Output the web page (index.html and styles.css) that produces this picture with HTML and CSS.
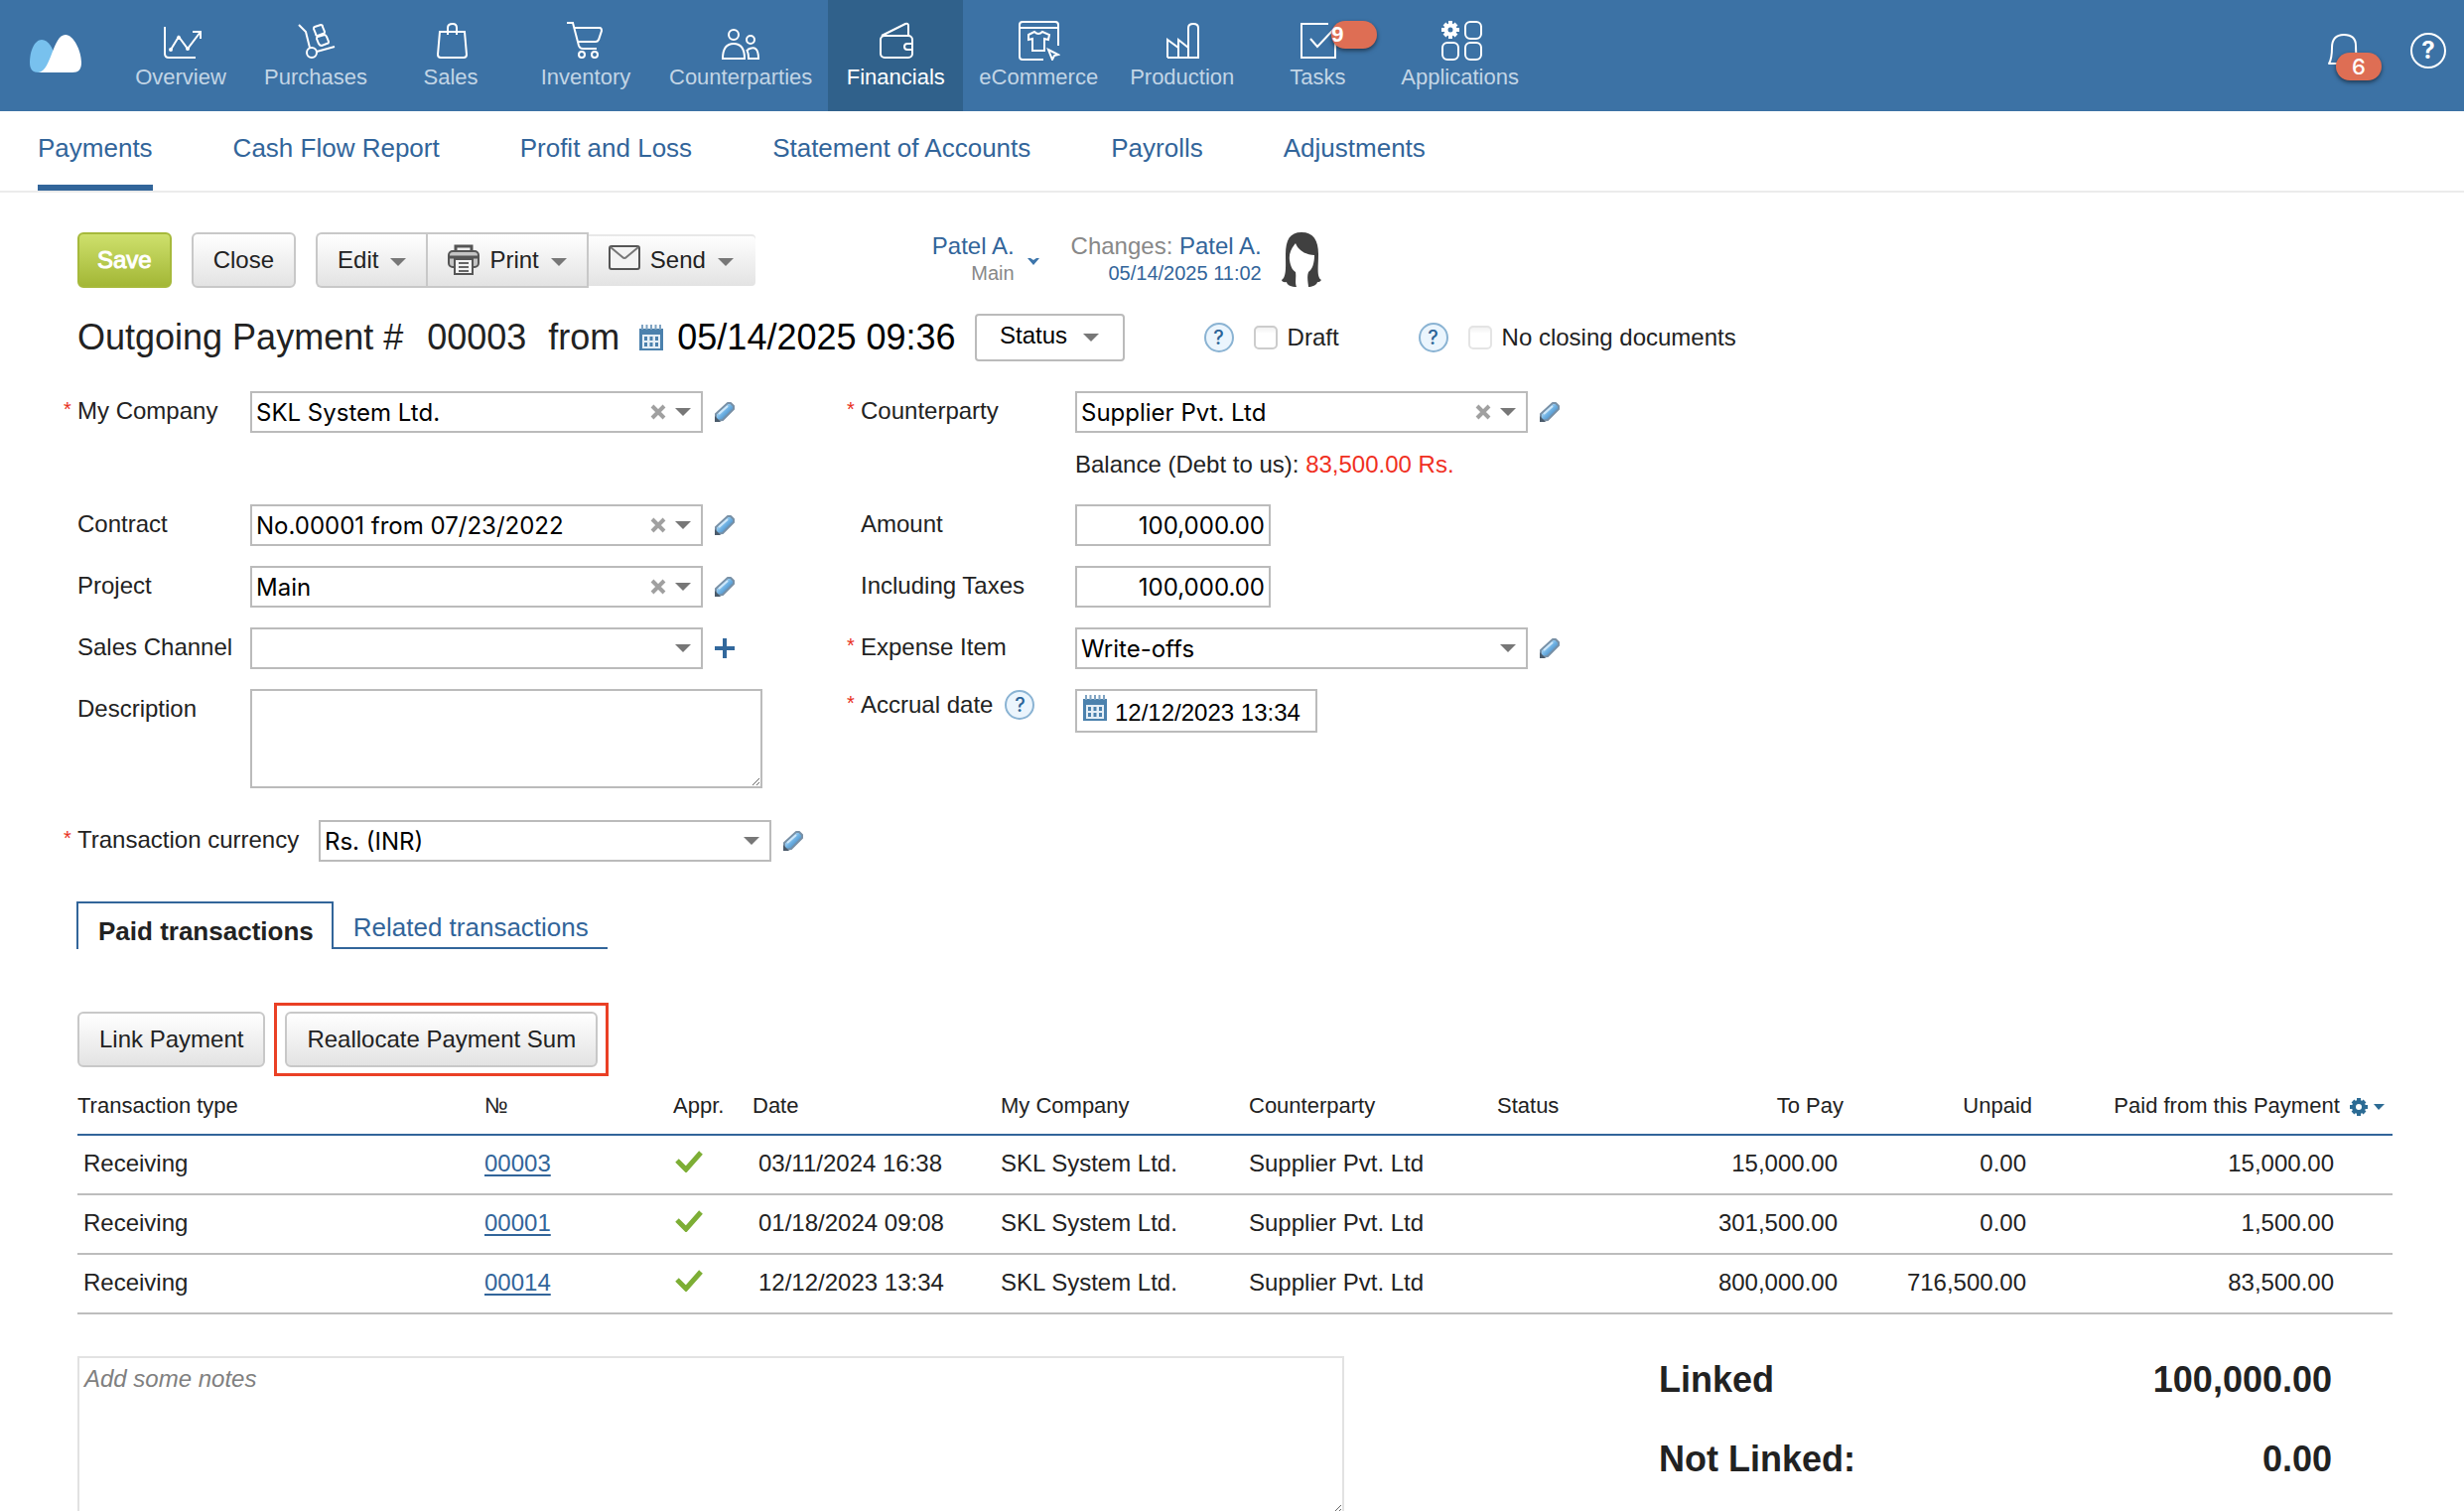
FILE: index.html
```html
<!DOCTYPE html>
<html lang="en">

<head>
    <meta charset="UTF-8">
    <meta name="viewport" content="width=device-width, initial-scale=1.0">
    <title>Outgoing Payment</title>
    <link rel="stylesheet" href="styles.css">
</head>

<body>
    <!-- shared icons -->
    <svg class="sprite" width="0" height="0" aria-hidden="true">
        <defs>
            <linearGradient id="pencil-fill" x1="0" y1="0" x2="1" y2="1">
                <stop offset="0.3" stop-color="#b5dcf7" />
                <stop offset="0.5" stop-color="#6fb2e4" />
                <stop offset="0.75" stop-color="#4a88bd" />
            </linearGradient>
        </defs>
        <symbol id="caret" viewBox="0 0 16 8">
            <path d="M0 0H16L8 8Z" fill="#777" />
        </symbol>
        <symbol id="cross" viewBox="0 0 16 16">
            <path d="M2 2L14 14M14 2L2 14" stroke="#a0a0a0" stroke-width="4" />
        </symbol>
        <symbol id="pencil" viewBox="0 0 20 20">
            <path d="M1 12L13 1H16L19 4V7L8 18L1 19Z" fill="url(#pencil-fill)" stroke="#7890a6" stroke-width="2" stroke-linejoin="round" />
            <path d="M4 12L13 4" stroke="#cfe8fa" stroke-width="2" />
            <path d="M0 14L6 20H0Z" fill="#4a5a6a" />
        </symbol>
        <symbol id="calendar" viewBox="0 0 24 26">
            <path d="M0 4H24V26H0Z" fill="#4b81ad" />
            <path d="M3 0V5M7.500 0V5M12 0V5M16.500 0V5M21 0V5" stroke="#7fa3c2" stroke-width="2" />
            <path d="M3 10H21V24H3Z" fill="#e4eef6" />
            <path d="M5 14H19M5 20H19" stroke="#4b81ad" stroke-width="4" stroke-dasharray="3 2.500" />
        </symbol>
        <symbol id="check" viewBox="0 0 28 22">
            <path d="M2 10L11 19L26 2" fill="none" stroke="#7dae35" stroke-width="5" />
        </symbol>
        <symbol id="gear" viewBox="0 0 18 18">
            <circle cx="9" cy="9" r="5" fill="none" stroke="currentColor" stroke-width="4" />
            <path d="M9 0V3M9 15V18M0 9H3M15 9H18M3 3L5 5M13 13L15 15M3 15L5 13M13 5L15 3" stroke="currentColor" stroke-width="4" />
        </symbol>
    </svg>

    <header class="header">
        <a class="logo" href="#" aria-label="Home">
            <svg width="52" height="38" viewBox="0 0 52 38">
                <path d="M0 28C0 16 5 5 12 5C19 5 23 14 25 20L14 38H9C3 38 0 35 0 28Z" fill="#78c1ee" />
                <path d="M9 38C22 36 23 0 36 0C44 0 52 16 52 28C52 35 49 38 43 38Z" fill="#fff" />
            </svg>
        </a>
        <nav class="main-nav">
            <a class="nav-item" href="#">
                <svg class="nav-icon" viewBox="0 0 44 40">
                    <path d="M6 6V33Q6 37 10 37H37M12 29L20 16L29 28L42 11M34 11H42V18" />
                    <circle cx="12" cy="29" r="1" /><circle cx="20" cy="17" r="1" /><circle cx="29" cy="28" r="1" />
                </svg>
                <span>Overview</span>
            </a>
            <a class="nav-item" href="#">
                <svg class="nav-icon" viewBox="0 0 44 40">
                    <path d="M5 4L12 11L16 27M23 31L41 26" />
                    <circle cx="18" cy="32" r="5" />
                    <path d="M21 6L27 4Q29 4 29 6L31 11Q31 13 29 13L24 15Q22 15 22 13L20 8Q20 6 21 6Z" />
                    <path d="M24 16L31 14Q32 14 33 16L35 21Q35 23 33 23L28 25Q26 25 25 23L23 18Q23 16 24 16Z" />
                </svg>
                <span>Purchases</span>
            </a>
            <a class="nav-item" href="#">
                <svg class="nav-icon" viewBox="0 0 44 40">
                    <path d="M11 11H36L38 34Q38 37 35 37H12Q9 37 9 34ZM19 14V7Q19 3 24 3Q28 3 28 7V14" />
                </svg>
                <span>Sales</span>
            </a>
            <a class="nav-item" href="#">
                <svg class="nav-icon" viewBox="0 0 44 40">
                    <path d="M3 2H9L15 25Q16 28 19 28H33M11 7H36Q38 7 38 10L35 19Q34 21 32 21H14" />
                    <circle cx="18" cy="34" r="3" /><circle cx="31" cy="34" r="3" />
                </svg>
                <span>Inventory</span>
            </a>
            <a class="nav-item" href="#">
                <svg class="nav-icon" viewBox="0 0 44 40">
                    <circle cx="15" cy="14" r="5" /><circle cx="32" cy="19" r="4" />
                    <path d="M4 38Q4 23 15 23Q26 23 26 38ZM29 29Q40 23 40 38H30Q30 32 28 29" />
                </svg>
                <span>Counterparties</span>
            </a>
            <a class="nav-item active" href="#">
                <svg class="nav-icon" viewBox="0 0 44 40">
                    <rect x="7" y="15" width="32" height="22" rx="4" />
                    <path d="M8 15L32 3Q35 2 35 5V15M39 23H34Q31 23 31 26Q31 29 34 29H39" />
                </svg>
                <span>Financials</span>
            </a>
            <a class="nav-item" href="#">
                <svg class="nav-icon" viewBox="0 0 44 40">
                    <path d="M27 39H6Q3 39 3 36V4Q3 1 6 1H39Q42 1 42 4V25M3 7H42" />
                    <path d="M12 14L18 11Q22 15 26 11L33 14L32 19L28 18V30H16V18L12 19Z" />
                    <path d="M32 29L42 34L38 35L36 39Z" />
                </svg>
                <span>eCommerce</span>
            </a>
            <a class="nav-item" href="#">
                <svg class="nav-icon" viewBox="0 0 44 40">
                    <path d="M7 37V19L18 27V19L28 27V37M18 27V37M28 27V7Q28 3 33 3Q38 3 38 7V37H7" />
                </svg>
                <span>Production</span>
            </a>
            <a class="nav-item" href="#">
                <svg class="nav-icon" viewBox="0 0 44 40">
                    <path d="M33 3H6V37H40V16M15 18L22 26L38 9" />
                </svg>
                <span>Tasks</span>
                <span class="badge task-badge">9</span>
            </a>
            <a class="nav-item" href="#">
                <svg class="nav-icon" viewBox="0 0 44 40">
                    <circle cx="12" cy="9" r="4.500" stroke-width="4" />
                    <path d="M12 0V4M12 14V18M3 9H7M17 9H21M6 3L8 5M16 13L18 15M6 15L8 13M16 5L18 3" stroke-width="4" />
                    <rect x="27" y="1" width="16" height="17" rx="5" />
                    <rect x="4" y="22" width="16" height="17" rx="5" />
                    <rect x="27" y="22" width="16" height="17" rx="5" />
                </svg>
                <span>Applications</span>
            </a>
        </nav>
        <div class="header-tools">
            <button class="bell" type="button" aria-label="Notifications">
                <svg width="34" height="36" viewBox="0 0 34 36">
                    <path d="M2 31Q5 26 5 15Q5 2 17 2Q29 2 29 13Q29 26 32 31Z" fill="none" stroke="#fff" stroke-width="2" stroke-linejoin="round" />
                </svg>
                <span class="badge bell-badge">6</span>
            </button>
            <button class="header-help" type="button">?</button>
        </div>
    </header>

    <nav class="sub-nav">
        <a class="active" href="#">Payments</a>
        <a href="#">Cash Flow Report</a>
        <a href="#">Profit and Loss</a>
        <a href="#">Statement of Accounts</a>
        <a href="#">Payrolls</a>
        <a href="#">Adjustments</a>
    </nav>

    <main class="content">
        <div class="toolbar">
            <button class="btn btn-save" type="button">Save</button>
            <button class="btn" type="button">Close</button>
            <div class="btn-group">
                <button class="btn" type="button">Edit <svg class="caret"><use href="#caret" /></svg></button>
                <button class="btn" type="button">
                    <svg width="32" height="32" viewBox="0 0 32 32">
                        <path d="M8 7V2H24V7" fill="#eee" stroke="#555" stroke-width="3" />
                        <rect x="1" y="7" width="30" height="16" rx="4" fill="#c4c4c4" stroke="#555" stroke-width="2" />
                        <path d="M2 13H30" stroke="#555" stroke-width="3" />
                        <path d="M7 15H25V30H7Z" fill="#f4f4f4" stroke="#555" stroke-width="2" />
                        <path d="M11 19H21M11 23H21M11 27H21" stroke="#666" stroke-width="2" />
                    </svg>
                    Print <svg class="caret"><use href="#caret" /></svg>
                </button>
                <button class="btn btn-send" type="button">
                    <svg class="mail" width="32" height="26" viewBox="0 0 32 26">
                        <rect x="1" y="1" width="30" height="23" rx="2" fill="#f3f3f3" stroke="#555" stroke-width="2" />
                        <path d="M2 2L14 12Q16 14 18 12L30 2" fill="none" stroke="#777" stroke-width="2" />
                    </svg>
                    Send <svg class="caret"><use href="#caret" /></svg>
                </button>
            </div>
            <div class="owner">
                <a href="#">Patel A.</a>
                <small>Main</small>
            </div>
            <svg class="owner-caret" width="12" height="7" viewBox="0 0 12 7">
                <path d="M0 0H3L6 2L9 0H12L6 7Z" fill="#3c75ab" />
            </svg>
            <div class="owner">
                <span>Changes: <a href="#">Patel A.</a></span>
                <small><a href="#">05/14/2025 11:02</a></small>
            </div>
            <svg class="avatar" width="40" height="56" viewBox="0 0 40 56">
                <path d="M20 0C32 0 37 8 37 22C37 35 35 45 40 48C38 51 36 50 36 50C36 53 30 55 27 55C27 52 25 45 27 40C31 37 33 31 33 23C26 23 17 19 14 11C11 15 7 20 8 28C9 35 11 38 14 40C15 46 13 50 15 55C10 55 5 53 5 50C2 51 0 49 0 48C5 45 4 34 4 23C4 8 8 0 20 0Z" fill="#404040" />
            </svg>
        </div>

        <div class="title-row">
            <h1>Outgoing Payment #</h1>
            <span class="title-number">00003</span>
            <span class="title-from">from</span>
            <svg class="title-calendar" width="24" height="26"><use href="#calendar" /></svg>
            <span class="title-date">05/14/2025 09:36</span>
            <button class="btn-status" type="button">Status <svg class="caret"><use href="#caret" /></svg></button>
            <div class="option option-draft">
                <button class="help" type="button">?</button>
                <label><input type="checkbox" id="draft">Draft</label>
            </div>
            <div class="option option-closing">
                <button class="help" type="button">?</button>
                <label><input type="checkbox" id="closing" disabled>No closing documents</label>
            </div>
        </div>

        <form action="/" class="form">
            <div class="form-grid">
                <label class="required" for="company">My Company</label>
                <div class="field">
                    <div class="combo">
                        <select id="company"><option>SKL System Ltd.</option></select>
                        <button class="clear" type="button" aria-label="Clear"><svg width="16" height="16"><use href="#cross" /></svg></button>
                        <svg class="caret"><use href="#caret" /></svg>
                    </div>
                    <button class="edit" type="button" aria-label="Edit company"><svg width="20" height="20"><use href="#pencil" /></svg></button>
                </div>
                <label class="required" for="counterparty">Counterparty</label>
                <div>
                    <div class="field">
                        <div class="combo">
                            <select id="counterparty"><option>Supplier Pvt. Ltd</option></select>
                            <button class="clear" type="button" aria-label="Clear"><svg width="16" height="16"><use href="#cross" /></svg></button>
                            <svg class="caret"><use href="#caret" /></svg>
                        </div>
                        <button class="edit" type="button" aria-label="Edit counterparty"><svg width="20" height="20"><use href="#pencil" /></svg></button>
                    </div>
                    <p class="balance">Balance (Debt to us): <span class="debt">83,500.00 Rs.</span></p>
                </div>

                <label for="contract">Contract</label>
                <div class="field">
                    <div class="combo">
                        <select id="contract"><option>No.00001 from 07/23/2022</option></select>
                        <button class="clear" type="button" aria-label="Clear"><svg width="16" height="16"><use href="#cross" /></svg></button>
                        <svg class="caret"><use href="#caret" /></svg>
                    </div>
                    <button class="edit" type="button" aria-label="Edit contract"><svg width="20" height="20"><use href="#pencil" /></svg></button>
                </div>
                <label for="amount">Amount</label>
                <input class="sum" id="amount" type="text" value="100,000.00">

                <label for="project">Project</label>
                <div class="field">
                    <div class="combo">
                        <select id="project"><option>Main</option></select>
                        <button class="clear" type="button" aria-label="Clear"><svg width="16" height="16"><use href="#cross" /></svg></button>
                        <svg class="caret"><use href="#caret" /></svg>
                    </div>
                    <button class="edit" type="button" aria-label="Edit project"><svg width="20" height="20"><use href="#pencil" /></svg></button>
                </div>
                <label for="taxes">Including Taxes</label>
                <input class="sum" id="taxes" type="text" value="100,000.00">

                <label for="channel">Sales Channel</label>
                <div class="field">
                    <div class="combo">
                        <select id="channel"><option></option></select>
                        <svg class="caret"><use href="#caret" /></svg>
                    </div>
                    <button class="edit" type="button" aria-label="Add channel">
                        <svg width="20" height="20" viewBox="0 0 20 20"><path d="M10 0V20M0 10H20" stroke="#32689c" stroke-width="4" /></svg>
                    </button>
                </div>
                <label class="required" for="expense">Expense Item</label>
                <div class="field">
                    <div class="combo">
                        <select id="expense"><option>Write-offs</option></select>
                        <svg class="caret"><use href="#caret" /></svg>
                    </div>
                    <button class="edit" type="button" aria-label="Edit expense item"><svg width="20" height="20"><use href="#pencil" /></svg></button>
                </div>

                <label for="description">Description</label>
                <textarea class="description" id="description"></textarea>
                <div class="accrual">
                    <label class="required" for="accrual">Accrual date</label>
                    <button class="help" type="button">?</button>
                </div>
                <div class="date-field">
                    <svg width="24" height="26"><use href="#calendar" /></svg>
                    <input id="accrual" type="text" value="12/12/2023 13:34">
                </div>
            </div>

            <div class="currency-row">
                <label class="required" for="currency">Transaction currency</label>
                <div class="field">
                    <div class="combo">
                        <select id="currency"><option>Rs. (INR)</option></select>
                        <svg class="caret"><use href="#caret" /></svg>
                    </div>
                    <button class="edit" type="button" aria-label="Edit currency"><svg width="20" height="20"><use href="#pencil" /></svg></button>
                </div>
            </div>
        </form>

        <div class="tabs">
            <a class="tab active" href="#">Paid transactions</a>
            <a class="tab" href="#">Related transactions</a>
        </div>

        <div class="actions">
            <button class="btn" type="button">Link Payment</button>
            <div class="highlight">
                <button class="btn" type="button">Reallocate Payment Sum</button>
            </div>
        </div>

        <table class="transactions">
            <colgroup>
                <col class="col-type">
                <col class="col-number">
                <col class="col-appr">
                <col class="col-wide">
                <col class="col-wide">
                <col class="col-wide">
                <col>
                <col class="col-number">
                <col class="col-number">
                <col class="col-paid">
            </colgroup>
            <thead>
                <tr>
                    <th>Transaction type</th>
                    <th>№</th>
                    <th>Appr.</th>
                    <th>Date</th>
                    <th>My Company</th>
                    <th>Counterparty</th>
                    <th>Status</th>
                    <th class="num">To Pay</th>
                    <th class="num">Unpaid</th>
                    <th class="num paid">
                        Paid from this Payment
                        <button class="settings" type="button" aria-label="Table settings">
                            <svg width="18" height="18"><use href="#gear" /></svg>
                            <svg width="11" height="6" viewBox="0 0 11 6"><path d="M0 0H11L5 6Z" fill="currentColor" /></svg>
                        </button>
                    </th>
                </tr>
            </thead>
            <tbody>
                <tr>
                    <td class="inset">Receiving</td>
                    <td><a href="#">00003</a></td>
                    <td><svg class="check"><use href="#check" /></svg></td>
                    <td class="inset">03/11/2024 16:38</td>
                    <td>SKL System Ltd.</td>
                    <td>Supplier Pvt. Ltd</td>
                    <td></td>
                    <td class="num">15,000.00</td>
                    <td class="num">0.00</td>
                    <td class="num paid">15,000.00</td>
                </tr>
                <tr>
                    <td class="inset">Receiving</td>
                    <td><a href="#">00001</a></td>
                    <td><svg class="check"><use href="#check" /></svg></td>
                    <td class="inset">01/18/2024 09:08</td>
                    <td>SKL System Ltd.</td>
                    <td>Supplier Pvt. Ltd</td>
                    <td></td>
                    <td class="num">301,500.00</td>
                    <td class="num">0.00</td>
                    <td class="num paid">1,500.00</td>
                </tr>
                <tr>
                    <td class="inset">Receiving</td>
                    <td><a href="#">00014</a></td>
                    <td><svg class="check"><use href="#check" /></svg></td>
                    <td class="inset">12/12/2023 13:34</td>
                    <td>SKL System Ltd.</td>
                    <td>Supplier Pvt. Ltd</td>
                    <td></td>
                    <td class="num">800,000.00</td>
                    <td class="num">716,500.00</td>
                    <td class="num paid">83,500.00</td>
                </tr>
            </tbody>
        </table>

        <div class="summary">
            <textarea class="notes" placeholder="Add some notes" aria-label="Notes"></textarea>
            <dl class="totals">
                <dt>Linked</dt>
                <dd>100,000.00</dd>
                <dt>Not Linked:</dt>
                <dd>0.00</dd>
            </dl>
        </div>
    </main>
</body>

</html>
```
FILE: styles.css
```css
* {
    box-sizing: border-box;
}

html {
    scrollbar-width: none;
}

body {
    margin: 0;
    background-color: #fff;
    color: #222;
    font-family: "Liberation Sans", Arial, sans-serif;
    font-size: 24px;
    line-height: 28px;
}

a {
    color: #32659a;
    text-decoration: none;
}

button {
    padding: 0;
    border: none;
    background: none;
    color: inherit;
    font: inherit;
    cursor: pointer;
}

svg {
    flex-shrink: 0;
}

.sprite {
    position: absolute;
}

.caret {
    width: 16px;
    height: 8px;
}

/* header */
.header {
    display: flex;
    height: 112px;
    padding-right: 18px;
    background-color: #3c72a5;
}

.logo {
    width: 114px;
    padding: 35px 0 0 30px;
}

.main-nav {
    display: flex;
}

.nav-item {
    position: relative;
    display: flex;
    flex-direction: column;
    align-items: center;
    min-width: 136px;
    padding: 21px 16px 0;
    color: #c2d5e5;
    font-size: 22px;
    line-height: 26px;
}

.nav-item.active {
    background-color: #30618b;
    color: #fff;
}

.nav-icon {
    width: 44px;
    height: 40px;
    margin-bottom: 4px;
    fill: none;
    stroke: #fff;
    stroke-width: 2;
}

.badge {
    position: absolute;
    width: 46px;
    height: 28px;
    border-radius: 14px;
    background-color: #de6e54;
    box-shadow: 0 2px 4px rgba(0, 0, 0, 0.5);
    color: #fff;
    font-family: Inter, sans-serif;
    font-size: 22px;
    font-weight: 500;
    line-height: 28px;
    text-align: center;
}

.task-badge {
    top: 21px;
    left: 82px;
    font-family: "Liberation Sans", Arial, sans-serif;
    font-size: 22px;
    font-weight: bold;
    text-align: left;
}

.header-tools {
    display: flex;
    align-items: flex-start;
    gap: 50px;
    margin-left: auto;
    padding-top: 33px;
}

.bell {
    position: relative;
    width: 34px;
    height: 36px;
}

.bell-badge {
    top: 20px;
    left: 9px;
}

.header-help {
    width: 36px;
    height: 36px;
    border: 2px solid #fff;
    border-radius: 50%;
    color: #fff;
    font-family: Inter, sans-serif;
    font-weight: bold;
}

/* second level menu */
.sub-nav {
    display: flex;
    gap: 81px;
    height: 82px;
    padding: 0 38px;
    border-bottom: 2px solid #ebebeb;
    font-size: 26px;
}

.sub-nav a {
    height: 80px;
    padding-top: 23px;
}

.sub-nav .active {
    border-bottom: 6px solid #32659a;
}

.content {
    padding: 40px 72px 0 78px;
}

/* buttons */
.btn {
    display: flex;
    align-items: center;
    gap: 10px;
    height: 56px;
    padding: 0 20px;
    border: 2px solid #c8c8c8;
    border-radius: 6px;
    background: linear-gradient(#fff, #e3e3e3);
    white-space: nowrap;
}

.btn-save {
    padding: 0 18px;
    border-color: #a6b93b;
    background: linear-gradient(#cee06c, #a3b736);
    color: #fff;
    -webkit-text-stroke: 1px #fff;
}

.btn-group {
    display: flex;
}

.btn-group .btn {
    border-radius: 0;
}

.btn-group .btn:first-child {
    border-right: none;
    border-radius: 6px 0 0 6px;
}

.btn-group .btn-send {
    padding: 0 22px 0 20px;
    border-color: transparent;
    border-left: none;
    border-radius: 0 6px 6px 0;
    background-clip: padding-box;
    box-shadow: inset 0 2px #e8e8e8;
}

.mail {
    margin-bottom: 4px;
}

.btn .caret {
    margin: 4px 0 0 2px;
}

/* toolbar */
.toolbar {
    display: flex;
    gap: 20px;
    margin-bottom: 26px;
}

.owner {
    color: #888;
    text-align: right;
    white-space: nowrap;
}

.btn-group + .owner {
    margin-left: 156px;
}

.owner small {
    display: block;
    font-size: 20px;
    line-height: 26px;
}

.owner-caret {
    margin: 26px 12px 0 -7px;
}

/* title */
.title-row {
    display: flex;
    align-items: center;
    height: 48px;
    margin-bottom: 30px;
    font-size: 36px;
    white-space: nowrap;
}

.title-row h1 {
    margin: 0;
    font-size: 36px;
    font-weight: normal;
}

.title-number {
    margin-left: 24px;
}

.title-from {
    margin-left: 22px;
}

.title-calendar {
    margin: 0 14px 0 20px;
}

.title-date {
    color: #000;
}

.btn-status {
    display: flex;
    align-items: center;
    justify-content: center;
    gap: 16px;
    width: 151px;
    height: 48px;
    margin-left: 19px;
    padding-bottom: 4px;
    border: 2px solid #bbb;
    border-radius: 4px;
    color: #000;
    font-size: 24px;
}

.btn-status .caret {
    margin-top: 4px;
}

.option {
    display: flex;
    align-items: center;
    gap: 20px;
    font-size: 24px;
}

.option-draft,
.option-closing {
    margin-left: 80px;
}

.option label {
    display: flex;
    align-items: center;
    gap: 10px;
}

.option input {
    appearance: none;
    width: 24px;
    height: 24px;
    margin: 0;
    border: 2px solid #ccc;
    border-radius: 5px;
    background: linear-gradient(#f2f2f2, #fff 30%);
}

.option input:disabled {
    border-color: #e4e4e4;
}

.help {
    width: 30px;
    height: 30px;
    border: 2px solid #8ab3d3;
    border-radius: 50%;
    background-color: #ebf5fd;
    color: #2b6498;
    font-family: Inter, sans-serif;
    font-size: 20px;
    font-weight: 500;
    line-height: 26px;
}

/* form */
.form-grid {
    display: grid;
    grid-template-columns: 174px 615px 216px auto;
    grid-template-rows: minmax(94px, auto);
    gap: 20px 0;
    align-items: start;
    justify-content: start;
}

.form label {
    line-height: 40px;
    white-space: nowrap;
}

.required {
    position: relative;
}

.required::before {
    content: "*";
    position: absolute;
    left: -14px;
    color: #e8301c;
    font-size: 20px;
    line-height: 36px;
}

.field {
    display: flex;
    align-items: center;
    gap: 12px;
}

.combo {
    display: flex;
    align-items: center;
    width: 456px;
    height: 42px;
    padding-right: 10px;
    border: 2px solid #bbb;
}

.combo select {
    appearance: none;
    flex: 1;
    min-width: 0;
    height: 38px;
    padding: 0 4px;
    border: none;
    background: none;
    color: #000;
    font-family: Inter, sans-serif;
    font-size: 24px;
}

.clear {
    display: flex;
    margin-right: 9px;
}

.edit {
    display: flex;
}

.balance {
    margin: 16px 0 0;
    line-height: 32px;
}

.debt {
    color: #f0301f;
}

.sum {
    width: 197px;
    height: 42px;
    padding: 0 4px;
    border: 2px solid #bbb;
    border-radius: 0;
    color: #000;
    font-family: Inter, sans-serif;
    font-size: 24px;
    text-align: right;
}

.description {
    width: 516px;
    height: 100px;
    border: 2px solid #bbb;
    font: inherit;
}

.accrual {
    display: flex;
    align-items: center;
    gap: 12px;
}

.accrual label {
    line-height: 32px;
}

.accrual .required::before {
    line-height: 28px;
}

.date-field {
    display: flex;
    gap: 8px;
    width: 244px;
    height: 44px;
    padding: 4px 6px;
    border: 2px solid #bbb;
}

.date-field input {
    width: 198px;
    height: 36px;
    padding: 0;
    border: none;
    color: #000;
    font: inherit;
}

.currency-row {
    display: grid;
    grid-template-columns: 243px auto;
    justify-content: start;
    margin-top: 32px;
}

/* tabs */
.tabs {
    display: flex;
    margin: 40px 0 54px -1px;
    font-size: 26px;
}

.tab {
    height: 48px;
    padding: 12px 19px 0 20px;
    border-bottom: 2px solid #32659a;
}

.tab.active {
    padding: 14px 18px 0 20px;
    border: 2px solid #32659a;
    border-bottom: none;
    color: #222;
    font-weight: bold;
}

.actions {
    display: flex;
    align-items: center;
    gap: 9px;
}

.highlight {
    padding: 6px 8px;
    border: 3px solid #ea4025;
}

/* transactions */
.transactions {
    width: 100%;
    border-collapse: separate;
    border-spacing: 0;
    table-layout: fixed;
}

.col-type {
    width: 410px;
}

.col-number {
    width: 190px;
}

.col-appr {
    width: 80px;
}

.col-wide {
    width: 250px;
}

.col-paid {
    width: 363px;
}

.transactions th {
    padding: 17px 0 15px;
    border-bottom: 2px solid #32659a;
    font-size: 22px;
    font-weight: normal;
    line-height: 26px;
    text-align: left;
    white-space: nowrap;
}

.transactions td {
    padding: 14px 0 16px;
    border-bottom: 2px solid #bdbdbd;
    white-space: nowrap;
}

.transactions td a {
    text-decoration: underline;
    text-decoration-thickness: 2px;
    text-underline-offset: 3px;
}

.transactions td.inset {
    padding-left: 6px;
}

.transactions th.num {
    text-align: right;
}

.transactions td.num {
    padding-right: 6px;
    text-align: right;
}

.transactions th.paid {
    padding-right: 8px;
}

.transactions td.paid {
    padding-right: 59px;
}

.settings {
    margin-left: 4px;
    color: #2c6b94;
}

.settings svg {
    vertical-align: middle;
}

.check {
    display: block;
    width: 28px;
    height: 22px;
    margin: 0 0 4px 2px;
}

/* notes and totals */
.summary {
    display: grid;
    grid-template-columns: 1276fr 739fr;
    gap: 317px;
    margin-top: 42px;
}

.notes {
    height: 160px;
    padding: 7px 5px;
    border: 2px solid #e2e2e2;
    font: inherit;
    resize: vertical;
}

.notes::placeholder {
    color: #808080;
    font-style: italic;
}

.totals {
    display: grid;
    grid-template-columns: 1fr auto;
    gap: 40px 0;
    align-content: start;
    margin: 0;
    padding: 4px 61px 0 0;
    font-size: 36px;
    font-weight: bold;
    line-height: 40px;
}

.totals dd {
    margin: 0;
    text-align: right;
}
```
